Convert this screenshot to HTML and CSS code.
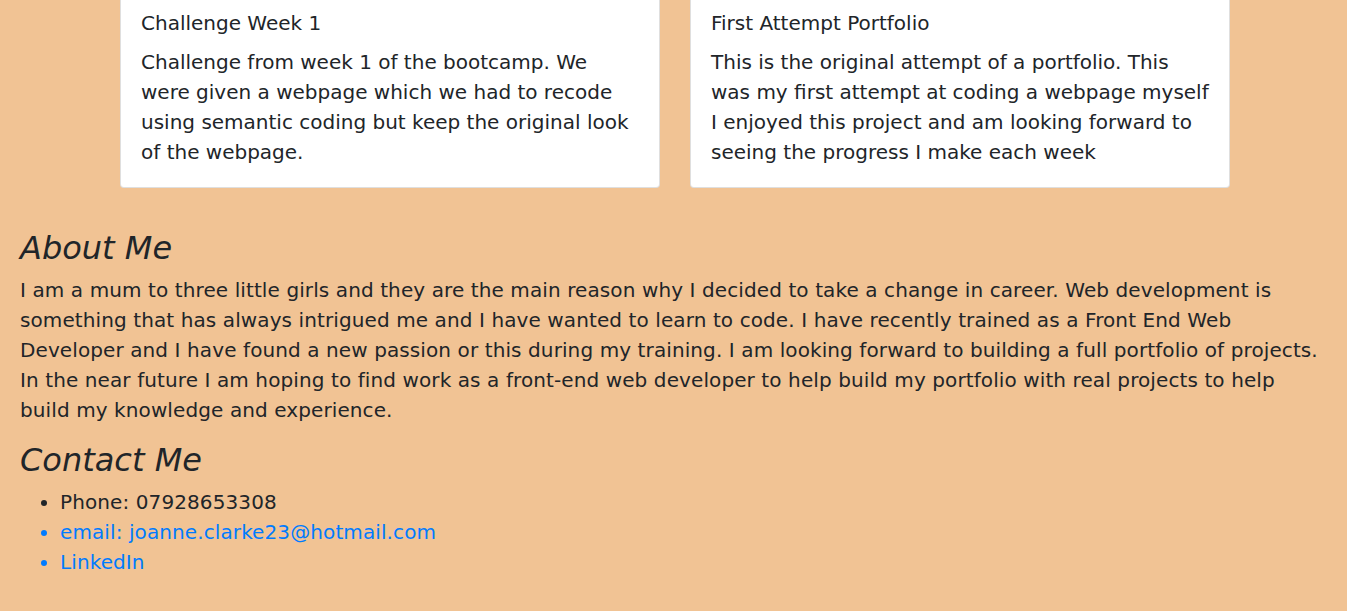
FILE: index.html
```html
<!DOCTYPE html>
<html lang="en">
<head>
<meta charset="utf-8">
<title>Portfolio</title>
<link rel="stylesheet" href="styles.css">
</head>
<body>
<main class="page">
  <section class="projects">
    <article class="card">
      <h5 class="card-title">Challenge Week 1</h5>
      <p class="card-text">Challenge from week 1 of the bootcamp. We were given a webpage which we had to recode using semantic coding but keep the original look of the webpage.</p>
    </article>
    <article class="card">
      <h5 class="card-title">First Attempt Portfolio</h5>
      <p class="card-text">This is the original attempt of a portfolio. This was my first attempt at coding a webpage myself I enjoyed this project and am looking forward to seeing the progress I make each week</p>
    </article>
  </section>
  <section class="about">
    <h2 class="heading">About Me</h2>
    <p class="text">I am a mum to three little girls and they are the main reason why I decided to take a change in career. Web development is something that has always intrigued me and I have wanted to learn to code. I have recently trained as a Front End Web Developer and I have found a new passion or this during my training. I am looking forward to building a full portfolio of projects. In the near future I am hoping to find work as a front-end web developer to help build my portfolio with real projects to help build my knowledge and experience.</p>
  </section>
  <section class="contact">
    <h2 class="heading">Contact Me</h2>
    <ul class="contact-list">
      <li>Phone: 07928653308</li>
      <li class="link-item"><a href="#">email: joanne.clarke23@hotmail.com</a></li>
      <li class="link-item"><a href="#">LinkedIn</a></li>
    </ul>
  </section>
</main>
</body>
</html>
```
FILE: styles.css
```css
html, body {
  margin: 0;
  padding: 0;
}
body {
  background: #f1c394;
  color: #212529;
  font-family: "DejaVu Sans", sans-serif;
  font-size: 20px;
  line-height: 1.5;
}
.page {
  padding: 0 20px;
}
.projects {
  display: flex;
  gap: 30px;
  width: 1110px;
  margin: -10px 0 41px 100px;
}
.card {
  flex: 0 0 540px;
  box-sizing: border-box;
  background: #fff;
  border: 1px solid rgba(0, 0, 0, 0.125);
  border-radius: 4px;
  padding: 20px;
}
.card-title {
  margin: 0 0 12px;
  font-size: 20px;
  font-weight: 400;
  line-height: 1.2;
}
.card-text {
  margin: 0;
}
.heading {
  margin: 0 0 8px;
  font-size: 32px;
  font-style: italic;
  font-weight: 400;
  line-height: 1.2;
}
.text {
  margin: 0 0 16px;
  letter-spacing: 0.1px;
}
.contact-list {
  margin: -1px 0 0;
  padding-left: 40px;
  letter-spacing: 0.1px;
}
.link-item {
  color: #007bff;
}
.link-item a {
  color: #007bff;
  text-decoration: none;
}
```
